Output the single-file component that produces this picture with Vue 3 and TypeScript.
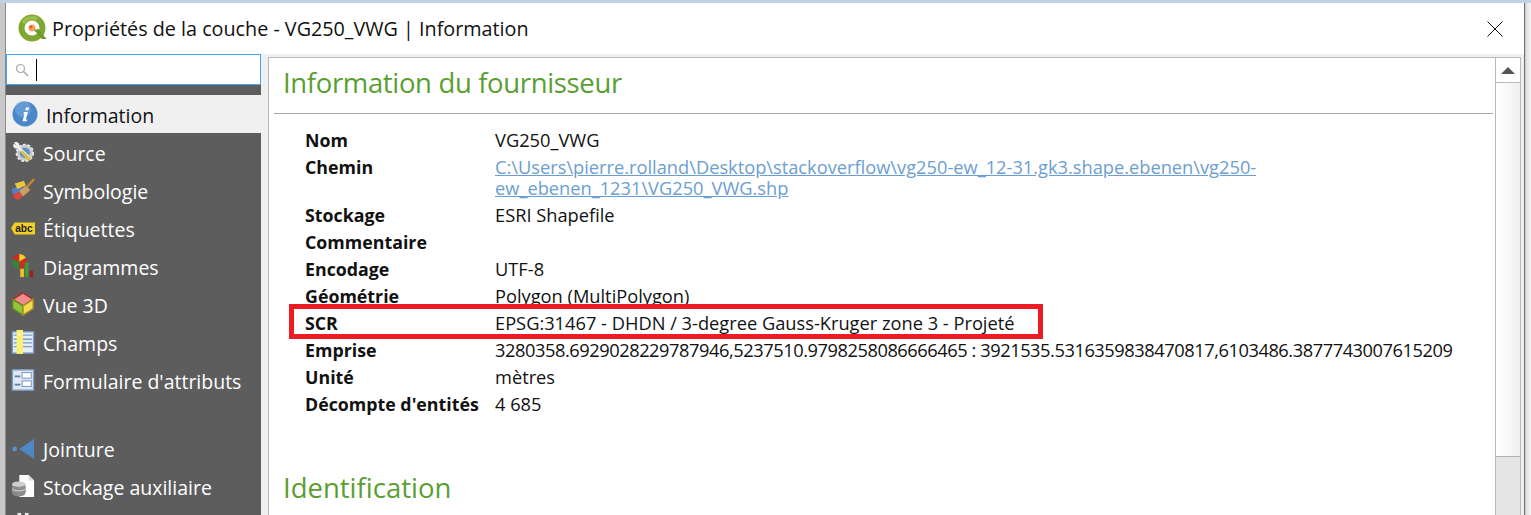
<template>
  <div class="screen">
    <div class="top-strip"></div>
    <div class="window">
      <div class="titlebar">
        <svg class="logo" width="30" height="30" viewBox="0 0 30 30">
          <circle cx="14" cy="14" r="10.5" fill="none" stroke="#7fa832" stroke-width="6" />
          <path d="M5 9a10.500 10.500 0 0 1 14-4" fill="none" stroke="#9cc04a" stroke-width="3.500" />
          <circle cx="14" cy="14" r="3.6" fill="#f2a65a" />
          <circle cx="13" cy="13" r="1.6" fill="#e2583e" />
          <path d="M16 16l8 9h4.500l-8-10z" fill="#6c9a2c" />
        </svg>
        <span class="title">Propriétés de la couche - VG250_VWG | Information</span>
        <svg class="close" width="16" height="16" viewBox="0 0 16 16">
          <path d="M0.500 0.500L15.500 15.500M15.500 0.500L0.500 15.500" stroke="#111" stroke-width="1" fill="none" />
        </svg>
      </div>
      <div class="body">
        <aside class="sidebar">
          <div class="search">
            <svg width="14" height="14" viewBox="0 0 14 14">
              <circle cx="5.500" cy="5.500" r="4" fill="none" stroke="#a8a8a8" stroke-width="1.200" />
              <path d="M8.500 8.500L13 13" stroke="#a8a8a8" stroke-width="1.600" />
            </svg>
            <span class="caret"></span>
          </div>
          <div class="menu">
            <div v-for="item in menuItems" :key="item.id" class="menu-item" :class="{ active: item.active, spaced: item.spaced }">
              <span class="menu-icon" v-html="item.icon"></span>
              <span v-if="item.label" class="menu-label">{{ item.label }}</span>
            </div>
          </div>
        </aside>
        <main class="panel">
          <div class="content">
            <h2 class="heading first">Information du fournisseur</h2>
            <div class="rule"></div>
            <div class="info">
              <div v-for="row in rows" :key="row.key" class="info-row">
                <div class="info-key">{{ row.key }}</div>
                <div class="info-val" :class="{ digits: row.digits }">
                  <a v-if="row.link" class="link">{{ row.value }}</a>
                  <template v-else>{{ row.value }}</template>
                </div>
              </div>
              <div class="highlight"></div>
            </div>
            <h2 class="heading second">Identification</h2>
          </div>
          <div class="scrollbar">
            <div class="arrow"><span class="tri"></span></div>
            <div class="thumb"></div>
            <div class="track"></div>
          </div>
        </main>
      </div>
    </div>
  </div>
</template>

<script setup lang="ts">
interface MenuItem {
  id: string
  label: string
  icon: string
  active?: boolean
  spaced?: boolean
}

const svg = (body: string, size = 24) => `<svg width="${size}" height="${size}" viewBox="0 0 26 26">${body}</svg>`

const menuItems: MenuItem[] = [
  {
    id: 'information',
    label: 'Information',
    active: true,
    icon: svg('<circle cx="13" cy="13" r="12.500" fill="#4a86c8"/><circle cx="11" cy="8" r="8" fill="#7fb0e0" opacity=".5"/><path d="M14 6.500h3l-.7 2.800h-3zM12 11h3.800l-2 7.500h1.500l-.6 1.800h-4.200l2-7.500h-1.200z" fill="#fff"/>', 26)
  },
  {
    id: 'source',
    label: 'Source',
    icon: svg('<circle cx="15" cy="14" r="9" fill="#c9c9c9" stroke="#e8e8e8" stroke-width="2" stroke-dasharray="3 2"/><circle cx="15" cy="14" r="5.500" fill="#5c8fc4"/><path d="M3 3c3-2 7 0 6 4l12 11-3 3-11-12c-3 1-6-2-4-5l3 2z" fill="#f0f0f0"/><path d="M12 11l10 9-3 3-9-10z" fill="#d8bf4a"/>')
  },
  {
    id: 'symbologie',
    label: 'Symbologie',
    icon: svg('<path d="M1 12l9-4 6 8-8 8-5-3z" fill="#d8483c"/><path d="M1 12l9-4 3 5-11 5z" fill="#5080c8"/><path d="M4 6l10-3 2 5-9 4z" fill="#e6c83c"/><path d="M9 14l7-6 5 5-8 7z" fill="#c9a06a"/><path d="M17 10l8-9" stroke="#c88a2c" stroke-width="2.500"/>')
  },
  {
    id: 'etiquettes',
    label: 'Étiquettes',
    icon: '<svg width="24" height="24" viewBox="0 0 26 26"><path d="M0 13l4-6h22v13h-22z" fill="#f0d020"/><text x="4.500" y="17.500" font-family="Liberation Sans, sans-serif" font-size="11" font-weight="700" fill="#222">abc</text></svg>'
  },
  {
    id: 'diagrammes',
    label: 'Diagrammes',
    icon: svg('<circle cx="9" cy="8" r="8" fill="#d02a20"/><path d="M9 8V0a8 8 0 0 1 7 4z" fill="#e6d22c"/><path d="M9 8v8a8 8 0 0 1-7.500-10.500z" fill="#2a8a3c"/><rect x="10" y="16" width="4" height="9" fill="#f0c020"/><rect x="15" y="9" width="4" height="16" fill="#3a9a3c"/><rect x="20" y="18" width="4" height="7" fill="#a02020"/>')
  },
  {
    id: 'vue3d',
    label: 'Vue 3D',
    icon: svg('<path d="M13 1l11 7-11 7-11-7z" fill="#f08c8c" stroke="#b02a2a" stroke-width="1.500"/><path d="M2 8l11 7v10l-11-7z" fill="#8fc63c" stroke="#6a8a20" stroke-width="1.500"/><path d="M24 8l-11 7v10l11-7z" fill="#f2dc50" stroke="#a89020" stroke-width="1.500"/>')
  },
  {
    id: 'champs',
    label: 'Champs',
    icon: svg('<rect x="1.500" y="2" width="23" height="23" fill="#e4ecf6" stroke="#7c9cc4" stroke-width="1.500"/><path d="M3 5.500h20M3 10h20M3 14h20M3 18h20" stroke="#7c9cc4" stroke-width="1.500"/><rect x="6" y="0" width="7" height="26" fill="#f8f070"/><circle cx="9" cy="5" r="1.200" fill="#fff"/>')
  },
  {
    id: 'formulaire',
    label: "Formulaire d'attributs",
    icon: svg('<rect x="1.500" y="2" width="23" height="22" fill="#dfe8f4" stroke="#7c9cc4" stroke-width="1.500"/><path d="M4 9h6M4 18h6" stroke="#5c7ca8" stroke-width="2"/><rect x="12" y="5" width="10" height="6" fill="#fff" stroke="#6f90bc"/><rect x="12" y="14" width="10" height="6" fill="#fff" stroke="#6f90bc"/>')
  },
  {
    id: 'jointure',
    label: 'Jointure',
    spaced: true,
    icon: svg('<circle cx="4" cy="14" r="2.500" fill="#5b92cf"/><path d="M9 14l16-11v22z" fill="#4f86c6"/>')
  },
  {
    id: 'stockage',
    label: 'Stockage auxiliaire',
    icon: svg('<path d="M9 1h10l6 6v18h-16z" fill="#fff"/><path d="M19 1v6h6" fill="#ddd"/><rect x="1" y="9" width="15" height="15" rx="5" fill="#8c8c8c"/><ellipse cx="8.500" cy="11" rx="7.500" ry="3" fill="#cfcfcf"/><path d="M1 16c2 3 13 3 15 0" stroke="#e0e0e0" fill="none"/>')
  },
  {
    // only the top of this icon is on screen, its label is below the fold
    id: 'next',
    label: '',
    icon: svg('<rect x="7" y="1" width="4" height="6" fill="#e8e8e8"/><rect x="15" y="1" width="4" height="6" fill="#e8e8e8"/>')
  }
]

const rows = [
  { key: 'Nom', value: 'VG250_VWG' },
  {
    key: 'Chemin',
    value: 'C:\\Users\\pierre.rolland\\Desktop\\stackoverflow\\vg250-ew_12-31.gk3.shape.ebenen\\vg250-ew_ebenen_1231\\VG250_VWG.shp',
    link: true
  },
  { key: 'Stockage', value: 'ESRI Shapefile' },
  { key: 'Commentaire', value: '' },
  { key: 'Encodage', value: 'UTF-8' },
  { key: 'Géométrie', value: 'Polygon (MultiPolygon)' },
  { key: 'SCR', value: 'EPSG:31467 - DHDN / 3-degree Gauss-Kruger zone 3 - Projeté' },
  {
    key: 'Emprise',
    value: '3280358.6929028229787946,5237510.9798258086666465 : 3921535.5316359838470817,6103486.3877743007615209',
    digits: true
  },
  { key: 'Unité', value: 'mètres' },
  { key: "Décompte d'entités", value: '4 685' }
]
</script>

<style>
html,
body {
  margin: 0;
  overflow: hidden;
  background: #fff;
}
</style>

<style scoped>
.screen {
  width: 1531px;
  height: 515px;
  overflow: hidden;
  display: flex;
  flex-direction: column;
  font-family: "Open Sans", "Noto Sans", sans-serif;
  color: #111;
  background: linear-gradient(to right, #c9c9c9 1525px, #e4e4e4 1527px, #f6f6f6 1531px);
}

.top-strip {
  height: 3px;
  background: #c5d0e4;
  flex: none;
}

.window {
  width: 1520px;
  margin-left: 5px;
  flex: 1;
  min-height: 0;
  display: flex;
  flex-direction: column;
  background: #f0f0f0;
  border-left: 1px solid #8a8a8a;
  border-right: 1px solid #6e6e6e;
  box-sizing: border-box;
}

.titlebar {
  height: 51px;
  flex: none;
  background: #fff;
  display: flex;
  align-items: center;
  padding: 0 21px 0 12px;
}

.logo { flex: none; margin-right: 4px; }

.title {
  font-size: 19.75px;
  flex: 1;
  white-space: nowrap;
}

.body {
  flex: 1;
  min-height: 0;
  display: flex;
  gap: 7px;
}

.sidebar {
  width: 255px;
  flex: none;
  background: #5d5d5d;
  display: flex;
  flex-direction: column;
}

.search {
  height: 31px;
  flex: none;
  box-sizing: border-box;
  background: #fff;
  border: 1px solid #42a5f5;
  display: flex;
  align-items: center;
  gap: 7px;
  padding-left: 8px;
}

.caret {
  width: 1px;
  height: 22px;
  background: #000;
}

.menu {
  margin-top: 10px;
  display: flex;
  flex-direction: column;
}

.menu-item {
  height: 38px;
  display: flex;
  align-items: center;
  gap: 8px;
  padding-left: 5px;
  color: #fff;
  font-size: 19.5px;
  white-space: nowrap;
}

.menu-label { padding-top: 2px; }

.menu-item.active {
  background: #f0f0f0;
  color: #111;
  padding-left: 6px;
}

.menu-item.spaced { margin-top: 30px; }

.menu-icon {
  flex: none;
  display: flex;
}

.panel {
  flex: 1;
  min-width: 0;
  margin: 3px 3px 0 0;
  background: #fff;
  border: 1px solid #b9b9b9;
  border-bottom: none;
  display: flex;
}

.content {
  flex: 1;
  min-width: 0;
  padding: 0 2px 0 5px;
}

.heading {
  margin: 0;
  font-weight: 400;
  font-size: 27.5px;
  line-height: 50px;
  color: #5a9e32;
  padding-left: 9px;
}

.heading.first { letter-spacing: -0.35px; }

.rule {
  height: 1px;
  background: #a8a8a8;
  margin-top: 5px;
}

.info {
  position: relative;
  margin-top: 16px;
  padding-left: 31px;
}

.info-row {
  display: flex;
  padding-bottom: 6px;
  font-size: 18.25px;
  line-height: 21px;
}

.info-key {
  width: 190px;
  flex: none;
  font-size: 17.8px;
  font-weight: 700;
  white-space: nowrap;
}

.info-val {
  width: 770px;
  margin: -1px 0 1px;
  white-space: nowrap;
}

.info-val.digits { letter-spacing: -0.45px; }

.link {
  display: block;
  white-space: normal;
  color: #6b9ed2;
  text-decoration: underline;
}

.highlight {
  position: absolute;
  left: 15px;
  top: 174px;
  width: 754px;
  height: 35px;
  box-sizing: border-box;
  border: 5px solid #ed1c24;
}

.heading.second { margin-top: 42px; }

.scrollbar {
  width: 24px;
  flex: none;
  border-left: 1px solid #b9b9b9;
  display: flex;
  flex-direction: column;
}

.arrow {
  height: 24px;
  flex: none;
  border-bottom: 1px solid #b9b9b9;
  display: flex;
  align-items: center;
  justify-content: center;
}

.tri {
  border-left: 7px solid transparent;
  border-right: 7px solid transparent;
  border-bottom: 7px solid #555;
}

.thumb {
  height: 373px;
  flex: none;
  border-bottom: 1px solid #b0b0b0;
  background: linear-gradient(to right, #fff, #f0f0f0);
}

.track {
  flex: 1;
  background: #e4e4e4;
}
</style>
